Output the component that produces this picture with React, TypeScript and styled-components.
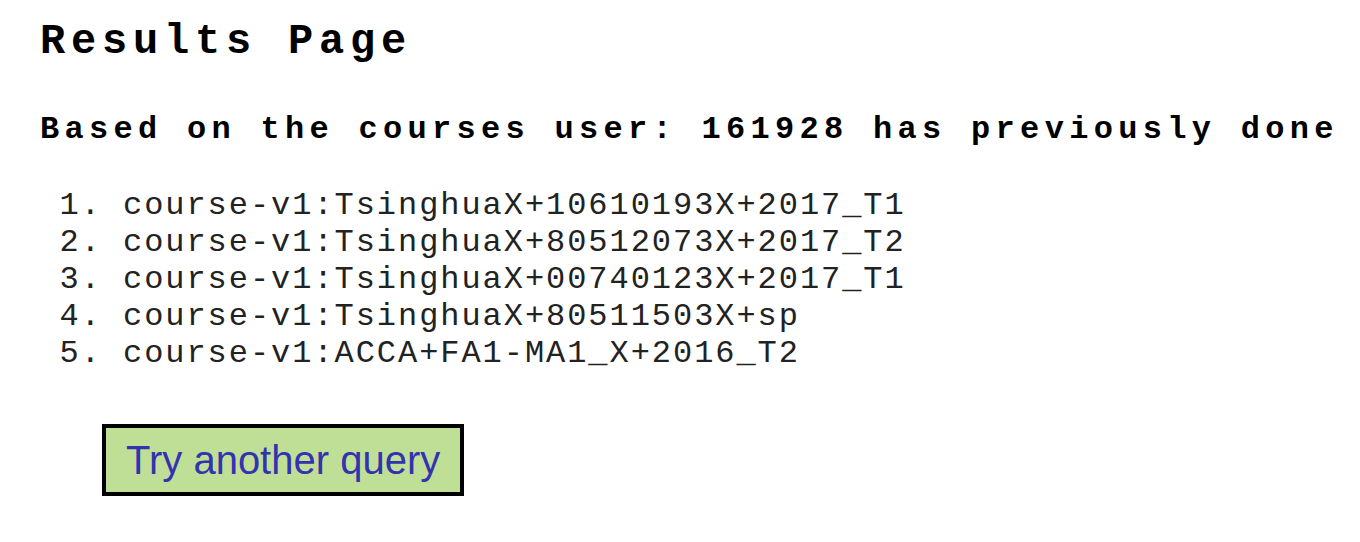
import React from "react";
import styled, { createGlobalStyle } from "styled-components";

const GlobalStyle = createGlobalStyle`
  html, body {
    margin: 0;
    padding: 0;
    background: #fff;
  }
  body {
    font-family: "Courier New", "Nimbus Mono PS", "FreeMono", "Liberation Mono", monospace;
    color: #000;
  }
`;

const Page = styled.div`
  display: flex;
  flex-direction: column;
  align-items: flex-start;
  padding: 18px 0 0 40px;
`;

const Title = styled.h1`
  margin: 0;
  font-size: 42px;
  line-height: 48px;
  font-weight: bold;
  letter-spacing: 5.8px;
`;

const Subtitle = styled.h3`
  margin: 44px 0 0;
  font-size: 32px;
  line-height: 40px;
  font-weight: bold;
  letter-spacing: 5.3px;
  white-space: nowrap;
`;

const CourseList = styled.ol`
  margin: 37px 0 0;
  padding-left: 83px;
  list-style: decimal;
`;

const Course = styled.li`
  font-size: 32px;
  line-height: 37px;
  letter-spacing: 1.95px;
  color: #222;
`;

const QueryButton = styled.button`
  margin: 52px 0 0 62px;
  padding: 9px 20px;
  border: 4px solid #000;
  background: #c0df96;
  color: #3333b0;
  font-family: "Liberation Sans", Arial, sans-serif;
  font-size: 40px;
  line-height: 46px;
  cursor: pointer;
`;

const courses = [
  "course-v1:TsinghuaX+10610193X+2017_T1",
  "course-v1:TsinghuaX+80512073X+2017_T2",
  "course-v1:TsinghuaX+00740123X+2017_T1",
  "course-v1:TsinghuaX+80511503X+sp",
  "course-v1:ACCA+FA1-MA1_X+2016_T2",
];

export default function App() {
  return (
    <>
      <GlobalStyle />
      <Page>
        <Title>Results Page</Title>
        <Subtitle>Based on the courses user: 161928 has previously done</Subtitle>
        <CourseList>
          {courses.map((c) => (
            <Course key={c}>{c}</Course>
          ))}
        </CourseList>
        <QueryButton>Try another query</QueryButton>
      </Page>
    </>
  );
}
